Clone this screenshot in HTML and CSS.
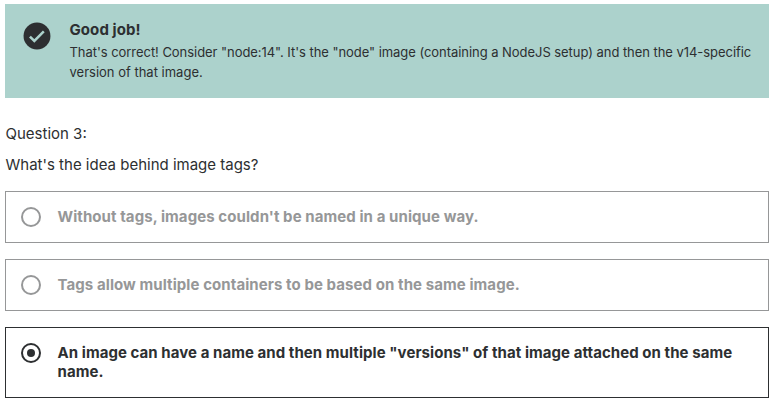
FILE: index.html
```html
<!DOCTYPE html>
<html lang="en">
<head>
<meta charset="utf-8">
<title>Quiz</title>
<link rel="stylesheet" href="styles.css">
</head>
<body>
<main class="quiz">
  <section class="alert">
    <svg class="alert-icon" viewBox="0 0 24 24" aria-hidden="true"><circle cx="12" cy="12" r="10.1"/><path d="M6.7 12.4l3.3 3.3 7.1-7.1"/></svg>
    <div class="alert-body">
      <h2 class="alert-title">Good job!</h2>
      <p class="alert-text"><span class="tight">That's correct! Consider "node:14". It's the "node" image (containing a NodeJS setup) and then the v14-specific</span><br>version of that image.</p>
    </div>
  </section>
  <p class="label">Question 3:</p>
  <p class="prompt">What's the idea behind image tags?</p>
  <ul class="options">
    <li class="option"><span class="radio"></span><span class="option-text">Without tags, images couldn't be named in a unique way.</span></li>
    <li class="option"><span class="radio"></span><span class="option-text">Tags allow multiple containers to be based on the same image.</span></li>
    <li class="option selected"><span class="radio"></span><span class="option-text">An image can have a name and then multiple "versions" of that image attached on the same<br>name.</span></li>
  </ul>
</main>
</body>
</html>
```
FILE: styles.css
```css
* { box-sizing: border-box; margin: 0; padding: 0; }
body {
  background: #fff;
  color: #2d2f31;
  font-family: Inter, "Liberation Sans", sans-serif;
  font-size: 15px;
}
.quiz { width: 769px; padding: 4px 0 0 5px; }
.alert {
  display: flex;
  gap: 16.5px;
  height: 94px;
  padding: 16px 0 16px 16px;
  background: #acd2cc;
}
.alert-icon { width: 32px; height: 32px; flex: none; fill: #2d2f31; }
.alert-icon path { fill: none; stroke: #acd2cc; stroke-width: 1.9; }
.alert-body { white-space: nowrap; }
.alert-title { font-size: 15px; font-weight: 700; line-height: 20px; letter-spacing: 0.08px; }
.alert-text { margin-top: 2px; font-size: 13px; line-height: 20px; }
.tight { letter-spacing: -0.05px; }
.label { margin-top: 25px; padding-left: 0.5px; line-height: 22px; }
.prompt { margin-top: 9px; padding-left: 0.5px; line-height: 22px; }
.options { margin-top: 15px; list-style: none; display: grid; gap: 16px; }
.option {
  display: flex;
  gap: 16.5px;
  min-height: 52px;
  padding: 15px;
  border: 1px solid #969798;
  color: #969798;
  font-weight: 700;
  line-height: 19px;
  letter-spacing: 0.08px;
  white-space: nowrap;
}
.radio {
  display: grid;
  place-items: center;
  flex: none;
  width: 20px;
  height: 20px;
  border: 2px solid currentColor;
  border-radius: 50%;
}
.selected { min-height: 71px; border-color: #2d2f31; color: #2d2f31; letter-spacing: 0.06px; }
.selected .radio::after {
  content: "";
  width: 8px;
  height: 8px;
  border-radius: 50%;
  background: currentColor;
}
```
